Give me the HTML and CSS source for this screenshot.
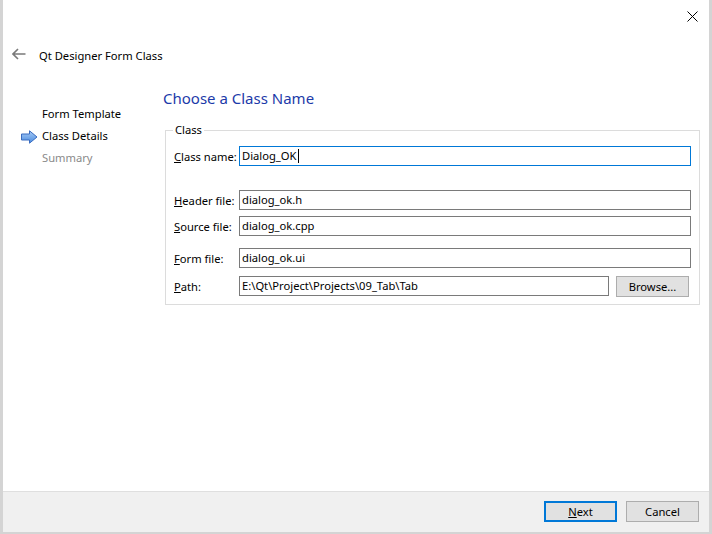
FILE: index.html
```html
<!DOCTYPE html>
<html>
<head>
<meta charset="utf-8">
<link rel="stylesheet" href="styles.css">
</head>
<body>
<div class="window">
  <div class="titlebar">
    <svg class="close" width="11" height="11" viewBox="0 0 11 11"><path d="M0.5 0.5 L10.5 10.5 M10.5 0.5 L0.5 10.5" stroke="#000" stroke-width="1"/></svg>
  </div>
  <div class="header">
    <svg class="back" width="14" height="12" viewBox="0 0 14 12"><path d="M6 1 L1 6 L6 11 M1 6 H13.5" fill="none" stroke="#7a7a7a" stroke-width="1.6"/></svg>
    <span class="title">Qt Designer Form Class</span>
  </div>
  <div class="main">
    <div class="sidebar">
      <div class="step">Form Template</div>
      <div class="step current">
        <svg class="arrow" width="17" height="14" viewBox="0 0 17 14">
          <defs><linearGradient id="g" x1="0" y1="0" x2="0" y2="1"><stop offset="0" stop-color="#a9ccf5"/><stop offset="1" stop-color="#4a8be0"/></linearGradient></defs>
          <path d="M0.5 4 H8.5 V0.8 L16 7 L8.5 13.2 V10 H0.5 Z" fill="url(#g)" stroke="#3a6cc0" stroke-width="1"/>
        </svg>
        Class Details</div>
      <div class="step disabled">Summary</div>
    </div>
    <div class="content">
      <h1 class="heading">Choose a Class Name</h1>
      <fieldset class="group">
        <legend>Class</legend>
        <div class="row r-name">
          <label><u>C</u>lass name:</label>
          <div class="input focus">Dialog_OK<span class="caret"></span></div>
        </div>
        <div class="row r-header">
          <label><u>H</u>eader file:</label>
          <div class="input">dialog_ok.h</div>
        </div>
        <div class="row r-source">
          <label><u>S</u>ource file:</label>
          <div class="input">dialog_ok.cpp</div>
        </div>
        <div class="row r-form">
          <label><u>F</u>orm file:</label>
          <div class="input">dialog_ok.ui</div>
        </div>
        <div class="row r-path">
          <label><u>P</u>ath:</label>
          <div class="input path">E:\Qt\Project\Projects\09_Tab\Tab</div>
          <div class="button browse">Browse...</div>
        </div>
      </fieldset>
    </div>
  </div>
  <div class="footer">
    <div class="button default"><u>N</u>ext</div>
    <div class="button">Cancel</div>
  </div>
</div>
</body>
</html>
```
FILE: styles.css
```css
html, body {
  margin: 0;
  padding: 0;
}
body {
  background: #d4d4d4;
  width: 712px;
  height: 534px;
  overflow: hidden;
  font-family: "Noto Sans", "Open Sans", sans-serif;
  font-size: 11.2px;
  color: #000;
}
.window {
  margin-left: 3px;
  width: 706px;
  height: 532px;
  background: #fff;
  display: flex;
  flex-direction: column;
}
.titlebar {
  height: 32px;
  display: flex;
  justify-content: flex-end;
  align-items: center;
  padding-right: 11px;
}
.header {
  height: 46px;
  display: flex;
  align-items: center;
  padding-left: 9px;
}
.back {
  margin-right: 13px;
  margin-top: -2px;
}
.title {
  line-height: 16px;
  margin-top: 2px;
}
.main {
  flex: 1;
  display: flex;
}
.sidebar {
  width: 160px;
  padding-top: 25px;
}
.step {
  height: 22px;
  line-height: 22px;
  padding-left: 39px;
  position: relative;
  white-space: nowrap;
}
.step.disabled {
  color: #8a8a8a;
}
.arrow {
  position: absolute;
  left: 18px;
  top: 5px;
}
.content {
  flex: 1;
  padding-right: 9px;
}
.heading {
  margin: 0;
  font-weight: normal;
  font-size: 15px;
  line-height: 20px;
  color: #1c3aa9;
  padding-top: 10px;
  height: 26px;
}
.group {
  margin: 9px 0 0 2px;
  border: 1px solid #dcdcdc;
  padding: 9px 8px 8px 8px;
  min-width: 0;
}
.group legend {
  padding: 0 2px;
  margin-left: -1px;
  line-height: 14px;
}
.row {
  display: flex;
  align-items: center;
  height: 20px;
}
.row label {
  width: 65px;
  flex: none;
  white-space: nowrap;
}
.r-header { margin-top: 24px; }
.r-source { margin-top: 6px; }
.r-form { margin-top: 12px; }
.r-path { margin-top: 8px; }
.input {
  flex: 1;
  height: 20px;
  box-sizing: border-box;
  border: 1px solid #7a7a7a;
  padding-left: 2px;
  line-height: 18px;
  white-space: nowrap;
  display: flex;
  align-items: center;
}
.input.focus {
  border-color: #0078d7;
}
.caret {
  display: inline-block;
  width: 1px;
  height: 14px;
  background: #000;
  margin-left: 1px;
}
.input.path {
  flex: none;
  width: 370px;
}
.button {
  box-sizing: border-box;
  width: 73px;
  height: 21px;
  border: 1px solid #adadad;
  background: #e1e1e1;
  text-align: center;
  line-height: 19px;
}
.browse {
  margin-left: 7px;
  margin-right: 1px;
}
.footer {
  height: 41px;
  box-sizing: border-box;
  border-top: 1px solid #dfdfdf;
  background: #f0f0f0;
  display: flex;
  justify-content: flex-end;
  align-items: flex-start;
  padding-top: 9px;
  padding-right: 10px;
  gap: 9px;
}
.button.default {
  border: 2px solid #0078d7;
  line-height: 17px;
}
```
